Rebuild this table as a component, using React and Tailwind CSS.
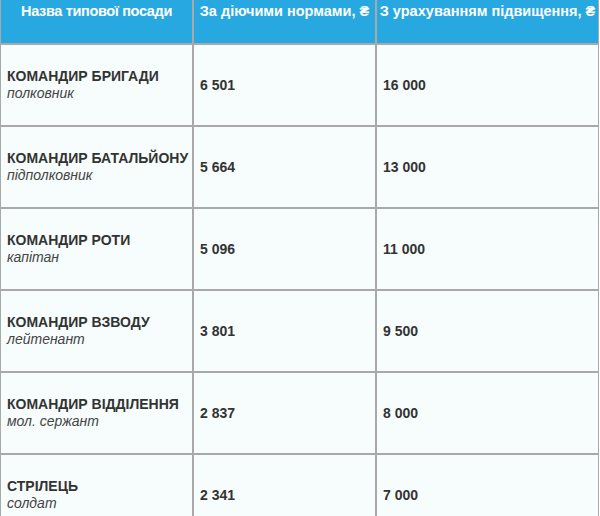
import React from 'react';

const rows = [
  { title: 'КОМАНДИР БРИГАДИ', rank: 'полковник', current: '6 501', raised: '16 000' },
  { title: 'КОМАНДИР БАТАЛЬЙОНУ', rank: 'підполковник', current: '5 664', raised: '13 000' },
  { title: 'КОМАНДИР РОТИ', rank: 'капітан', current: '5 096', raised: '11 000' },
  { title: 'КОМАНДИР ВЗВОДУ', rank: 'лейтенант', current: '3 801', raised: '9 500' },
  { title: 'КОМАНДИР ВІДДІЛЕННЯ', rank: 'мол. сержант', current: '2 837', raised: '8 000' },
  { title: 'СТРІЛЕЦЬ', rank: 'солдат', current: '2 341', raised: '7 000' },
];

const headers = [
  { label: 'Назва типової посади', cls: 'tracking-[-0.35px]' },
  { label: 'За діючими нормами, ₴', cls: '' },
  { label: 'З урахуванням підвищення, ₴', cls: '' },
];

export default function App() {
  return (
    <div className="w-[600px] h-[516px] overflow-hidden bg-white font-['Liberation_Sans',Arial,sans-serif]">
      <table className="w-[599px] table-fixed border-separate border-spacing-0 text-[#333]">
        <colgroup>
          <col className="w-[193px]" />
          <col className="w-[183px]" />
          <col className="w-[223px]" />
        </colgroup>
        <thead>
          <tr>
            {headers.map((h) => (
              <th
                key={h.label}
                className={`h-[44px] border border-t-0 border-[#a9a9a9] bg-[#27a8e0] px-0 pt-[1px] align-top text-center text-[14.5px] font-bold leading-[20px] text-white whitespace-nowrap ${h.cls}`}
              >
                {h.label}
              </th>
            ))}
          </tr>
        </thead>
        <tbody>
          {rows.map((r) => (
            <tr key={r.title}>
              <td className="h-[82px] border border-[#a9a9a9] bg-[#f7fcfc] pl-[6px] pr-0 align-middle whitespace-nowrap">
                <div className="text-[14px] font-bold leading-[17px]">{r.title}</div>
                <div className="text-[14px] italic leading-[17px] text-[#444]">{r.rank}</div>
              </td>
              <td className="h-[82px] border border-[#a9a9a9] bg-[#f7fcfc] pl-[6px] align-middle text-[14px] font-bold">
                {r.current}
              </td>
              <td className="h-[82px] border border-[#a9a9a9] bg-[#f7fcfc] pl-[6px] align-middle text-[14px] font-bold">
                {r.raised}
              </td>
            </tr>
          ))}
        </tbody>
      </table>
    </div>
  );
}
